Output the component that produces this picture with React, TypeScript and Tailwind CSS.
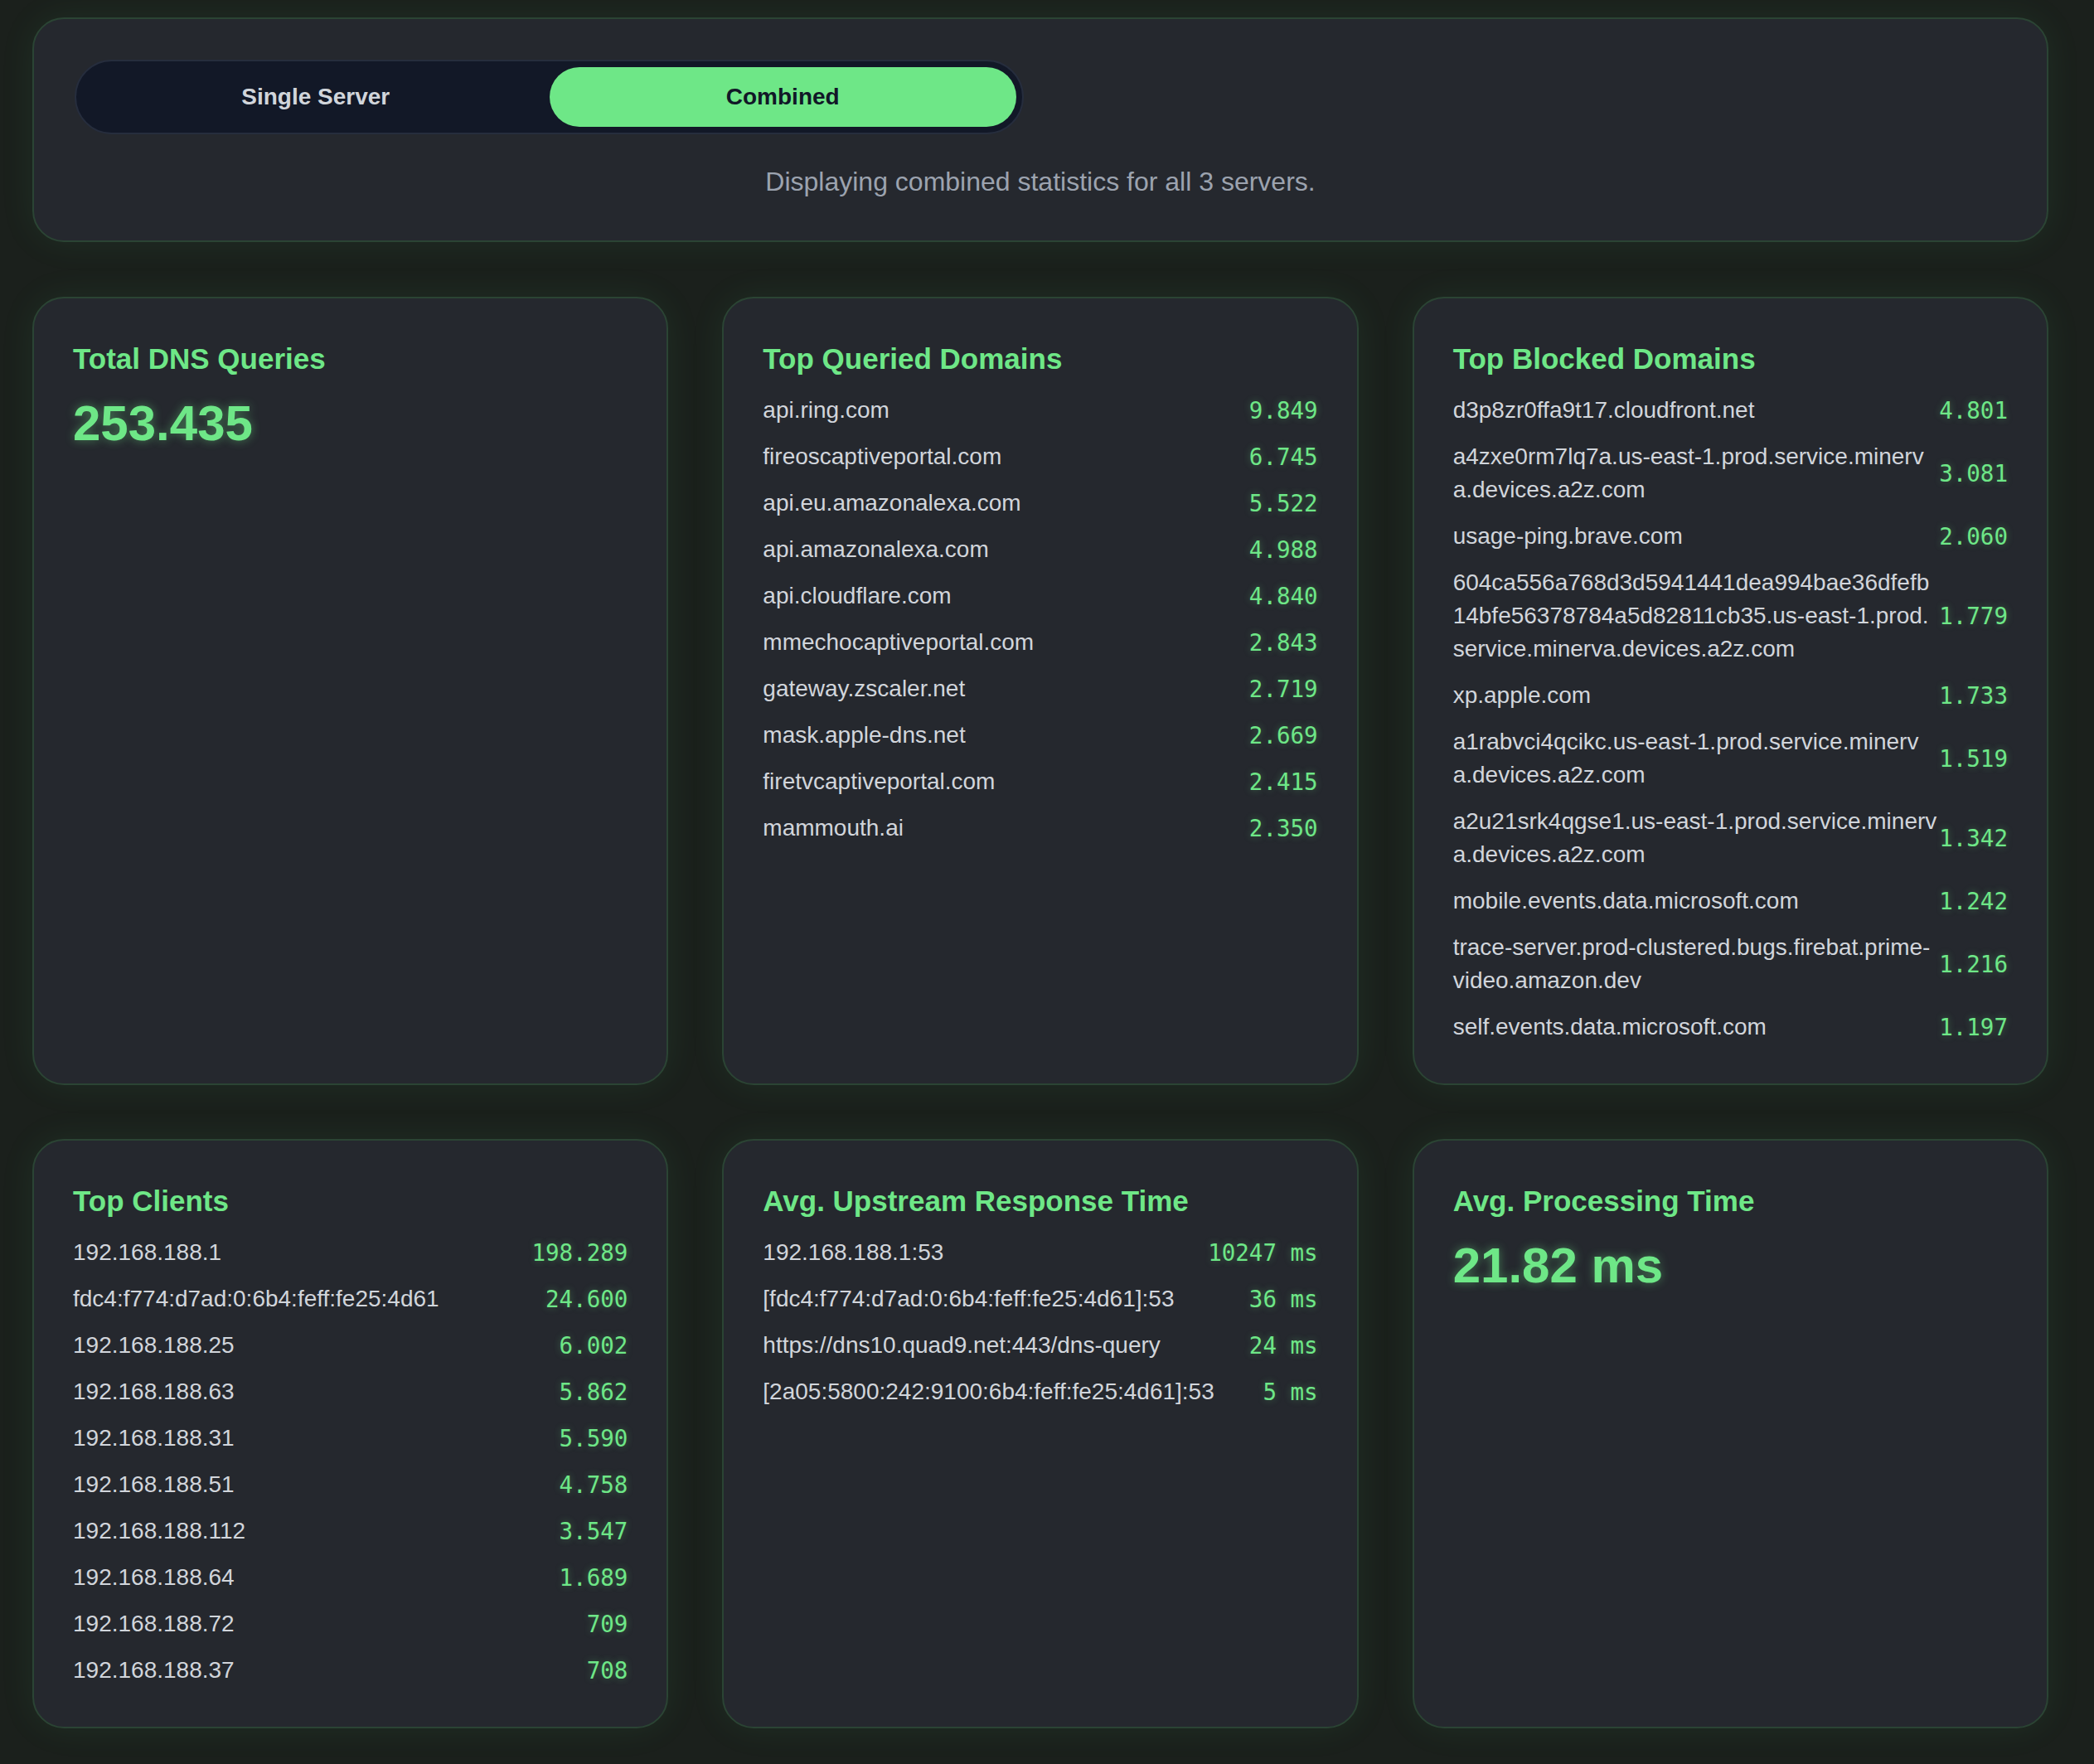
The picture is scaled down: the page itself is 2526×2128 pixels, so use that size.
import React from "react";

type Row = { lines: string[]; value: string };

const queried: Row[] = [
  { lines: ["api.ring.com"], value: "9.849" },
  { lines: ["fireoscaptiveportal.com"], value: "6.745" },
  { lines: ["api.eu.amazonalexa.com"], value: "5.522" },
  { lines: ["api.amazonalexa.com"], value: "4.988" },
  { lines: ["api.cloudflare.com"], value: "4.840" },
  { lines: ["mmechocaptiveportal.com"], value: "2.843" },
  { lines: ["gateway.zscaler.net"], value: "2.719" },
  { lines: ["mask.apple-dns.net"], value: "2.669" },
  { lines: ["firetvcaptiveportal.com"], value: "2.415" },
  { lines: ["mammouth.ai"], value: "2.350" },
];

const blocked: Row[] = [
  { lines: ["d3p8zr0ffa9t17.cloudfront.net"], value: "4.801" },
  { lines: ["a4zxe0rm7lq7a.us-east-1.prod.service.minerv", "a.devices.a2z.com"], value: "3.081" },
  { lines: ["usage-ping.brave.com"], value: "2.060" },
  {
    lines: [
      "604ca556a768d3d5941441dea994bae36dfefb",
      "14bfe56378784a5d82811cb35.us-east-1.prod.",
      "service.minerva.devices.a2z.com",
    ],
    value: "1.779",
  },
  { lines: ["xp.apple.com"], value: "1.733" },
  { lines: ["a1rabvci4qcikc.us-east-1.prod.service.minerv", "a.devices.a2z.com"], value: "1.519" },
  { lines: ["a2u21srk4qgse1.us-east-1.prod.service.minerv", "a.devices.a2z.com"], value: "1.342" },
  { lines: ["mobile.events.data.microsoft.com"], value: "1.242" },
  { lines: ["trace-server.prod-clustered.bugs.firebat.prime-", "video.amazon.dev"], value: "1.216" },
  { lines: ["self.events.data.microsoft.com"], value: "1.197" },
];

const clients: Row[] = [
  { lines: ["192.168.188.1"], value: "198.289" },
  { lines: ["fdc4:f774:d7ad:0:6b4:feff:fe25:4d61"], value: "24.600" },
  { lines: ["192.168.188.25"], value: "6.002" },
  { lines: ["192.168.188.63"], value: "5.862" },
  { lines: ["192.168.188.31"], value: "5.590" },
  { lines: ["192.168.188.51"], value: "4.758" },
  { lines: ["192.168.188.112"], value: "3.547" },
  { lines: ["192.168.188.64"], value: "1.689" },
  { lines: ["192.168.188.72"], value: "709" },
  { lines: ["192.168.188.37"], value: "708" },
];

const upstream: Row[] = [
  { lines: ["192.168.188.1:53"], value: "10247 ms" },
  { lines: ["[fdc4:f774:d7ad:0:6b4:feff:fe25:4d61]:53"], value: "36 ms" },
  { lines: ["https://dns10.quad9.net:443/dns-query"], value: "24 ms" },
  { lines: ["[2a05:5800:242:9100:6b4:feff:fe25:4d61]:53"], value: "5 ms" },
];

function Card({ title, children }: { title: string; children?: React.ReactNode }) {
  return (
    <div className="rounded-[38px] border-2 border-[#2b4434] bg-[#25282e] px-[47px] pt-[47px] pb-[48px] shadow-[0_0_44px_rgba(74,222,128,0.08)]">
      <h2 className="text-[35px] font-bold leading-[52px] text-[#6ee787]">{title}</h2>
      {children}
    </div>
  );
}

function List({ rows }: { rows: Row[] }) {
  return (
    <div className="mt-[16px] flex flex-col gap-[16px]">
      {rows.map((r, i) => (
        <div key={i} className="flex items-center justify-between">
          <div className="min-w-0 flex-1 text-[28px] leading-[40px] text-[#d1d5db]">
            {r.lines.map((l, j) => (
              <div key={j} className="whitespace-nowrap">
                {l}
              </div>
            ))}
          </div>
          <div className="shrink-0 whitespace-nowrap font-['DejaVu_Sans_Mono',monospace] text-[27.5px] leading-[40px] text-[#6ee787] [text-shadow:0_0_8px_rgba(110,231,135,0.35)]">
            {r.value}
          </div>
        </div>
      ))}
    </div>
  );
}

function BigValue({ children }: { children: React.ReactNode }) {
  return (
    <div className="mt-[16px] text-[60px] font-bold leading-[71px] text-[#6ee787] [text-shadow:0_0_12px_rgba(110,231,135,0.45)]">
      {children}
    </div>
  );
}

export default function App() {
  return (
    <div className="min-h-[2128px] w-full bg-[#1b201c] font-['Liberation_Sans',Arial,sans-serif] pb-[40px] pt-[21px]">
      <div className="ml-[39px] w-[2432px]">
        <div className="rounded-[38px] border-2 border-[#2b4434] bg-[#25282e] px-[49px] pt-[49px] pb-[49px] shadow-[0_0_44px_rgba(74,222,128,0.08)]">
          <div className="flex h-[90px] w-[1145px] rounded-full border-2 border-[#262d3d] bg-[#121827] p-[7px]">
            <button className="flex flex-1 items-center justify-center rounded-full text-[28px] font-bold text-[#d1d5db]">
              Single Server
            </button>
            <button className="flex flex-1 items-center justify-center rounded-full bg-[#6ee787] text-[28px] font-bold text-[#111827]">
              Combined
            </button>
          </div>
          <p className="mt-[35px] text-center text-[32px] leading-[44px] text-[#9ca3af]">
            Displaying combined statistics for all 3 servers.
          </p>
        </div>

        <div className="mt-[66px] grid grid-cols-3 gap-[65px]">
          <Card title="Total DNS Queries">
            <BigValue>253.435</BigValue>
          </Card>
          <Card title="Top Queried Domains">
            <List rows={queried} />
          </Card>
          <Card title="Top Blocked Domains">
            <List rows={blocked} />
          </Card>
          <Card title="Top Clients">
            <List rows={clients} />
          </Card>
          <Card title="Avg. Upstream Response Time">
            <List rows={upstream} />
          </Card>
          <Card title="Avg. Processing Time">
            <BigValue>21.82 ms</BigValue>
          </Card>
        </div>
      </div>
    </div>
  );
}
